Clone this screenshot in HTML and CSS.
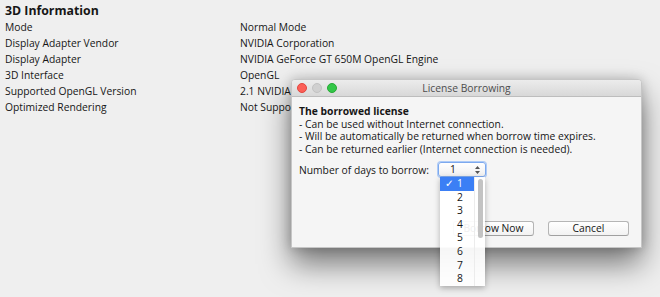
FILE: index.html
```html
<!DOCTYPE html>
<html lang="en">
<head>
  <meta charset="UTF-8">
  <meta name="viewport" content="width=device-width, initial-scale=1.0">
  <title>3D Information</title>
  <link rel="stylesheet" href="styles.css">
</head>
<body>
  <div class="info">
    <h2>3D Information</h2>
    <div class="rows">
      <span>Mode</span><span>Normal Mode</span>
      <span>Display Adapter Vendor</span><span>NVIDIA Corporation</span>
      <span>Display Adapter</span><span>NVIDIA GeForce GT 650M OpenGL Engine</span>
      <span>3D Interface</span><span>OpenGL</span>
      <span>Supported OpenGL Version</span><span>2.1 NVIDIA-10.0.43 310.41.05f01</span>
      <span>Optimized Rendering</span><span>Not Supported</span>
    </div>
  </div>

  <div class="dialog">
    <div class="titlebar">
      <div class="lights">
        <span class="light red"></span>
        <span class="light gray"></span>
        <span class="light green"></span>
      </div>
      <div class="title">License Borrowing</div>
      <div></div>
    </div>
    <div class="dialog-body">
      <p class="lead">The borrowed license</p>
      <ul class="notes">
        <li>- Can be used without Internet connection.</li>
        <li>- Will be automatically be returned when borrow time expires.</li>
        <li>- Can be returned earlier (Internet connection is needed).</li>
      </ul>
      <div class="days-row">
        <span class="days-label">Number of days to borrow:</span>
        <div class="select">
          <span>1</span>
          <svg width="7" height="10" viewBox="0 0 7 10">
            <path d="M1 4 L3.5 1 L6 4 Z M1 6 L3.5 9 L6 6 Z" fill="#555"/>
          </svg>
        </div>
      </div>
      <div class="buttons">
        <button>Borrow Now</button>
        <button>Cancel</button>
      </div>
    </div>
  </div>

  <!-- open popup of the days select -->
  <div class="menu">
    <ul class="menu-list">
      <li class="selected"><span class="check">&#10003;</span>1</li>
      <li>2</li>
      <li>3</li>
      <li>4</li>
      <li>5</li>
      <li>6</li>
      <li>7</li>
      <li>8</li>
    </ul>
    <div class="scrollbar"><div class="thumb"></div></div>
  </div>
</body>
</html>
```

FILE: styles.css
```css
body {
  margin: 0;
  padding: 2px 5px 0;
  height: 297px;
  overflow: hidden;
  background: #efefef;
  font-family: "Open Sans", "DejaVu Sans", sans-serif;
  font-size: 10.3px;
  color: #161616;
}
h2 {
  margin: 0;
  font-size: 12.3px;
  font-weight: bold;
  line-height: 17px;
}
.rows {
  display: grid;
  grid-template-columns: 235px auto;
  line-height: 16px;
}

.dialog {
  position: absolute;
  left: 291px;
  top: 79px;
  width: 351px;
  height: 169px;
  box-sizing: border-box;
  display: flex;
  flex-direction: column;
  background: #f5f5f5;
  border: 1px solid #c6c6c6;
  border-radius: 4px 4px 0 0;
  box-shadow: 0 16px 30px rgba(0, 0, 0, 0.5), 0 0 12px rgba(0, 0, 0, 0.2);
}
.titlebar {
  display: grid;
  grid-template-columns: 1fr auto 1fr;
  align-items: center;
  height: 16px;
  padding: 0 5px;
  background: linear-gradient(#ececec, #d8d8d8);
  border-bottom: 1px solid #bdbdbd;
  border-radius: 3px 3px 0 0;
}
.lights {
  display: flex;
  gap: 5px;
}
.light {
  width: 10px;
  height: 10px;
  border-radius: 50%;
  box-sizing: border-box;
}
.red {
  background: #fc5f57;
  border: 1px solid #e2463f;
}
.gray {
  background: #d0d0d0;
  border: 1px solid #c2c2c2;
}
.green {
  background: #33c748;
  border: 1px solid #27aa35;
}
.title {
  color: #4d4d4d;
  line-height: 16px;
}

.dialog-body {
  flex: 1;
  display: flex;
  flex-direction: column;
  padding: 8px 12px 11px 7px;
}
.lead {
  margin: 0;
  font-weight: bold;
  line-height: 12.5px;
}
.notes {
  margin: 0;
  padding: 0;
  list-style: none;
  line-height: 12.5px;
}
.days-row {
  display: flex;
  align-items: center;
  margin-top: 6px;
  line-height: 15px;
}
.days-label {
  width: 139px;
  padding-top: 2px;
}
.select {
  display: flex;
  align-items: center;
  justify-content: space-between;
  width: 48px;
  height: 15px;
  box-sizing: border-box;
  padding: 0 4px 0 11px;
  line-height: 13px;
  background: linear-gradient(#ffffff, #f0f0f0);
  border: 1px solid #7da9ee;
  border-radius: 3px;
  box-shadow: 0 0 0 1px #aecbf7;
}
.buttons {
  margin-top: auto;
  display: flex;
  justify-content: flex-end;
  gap: 14px;
}
button {
  width: 81px;
  height: 15px;
  padding: 0;
  font: inherit;
  line-height: 13px;
  color: #161616;
  background: linear-gradient(#ffffff, #f2f2f2);
  border: 1px solid #b5b5b5;
  border-bottom-color: #a0a0a0;
  border-radius: 3px;
}

.menu {
  position: absolute;
  left: 440px;
  top: 177px;
  width: 45px;
  height: 109px;
  display: flex;
  background: rgba(255, 255, 255, 0.93);
  box-shadow: 0 2px 6px rgba(0, 0, 0, 0.28);
}
.menu-list {
  flex: 1;
  margin: 0;
  padding: 0;
  list-style: none;
  line-height: 13.6px;
}
.menu-list li {
  position: relative;
  padding-left: 17px;
}
.menu-list .selected {
  background: #3b7ff5;
  color: #fff;
}
.check {
  position: absolute;
  left: 5px;
  font-weight: bold;
}
.scrollbar {
  width: 11px;
  border-left: 1px solid #ececec;
  padding: 2px 2px 0 3px;
  box-sizing: border-box;
}
.thumb {
  height: 59px;
  border-radius: 3px;
  background: #c3c3c3;
}
```
